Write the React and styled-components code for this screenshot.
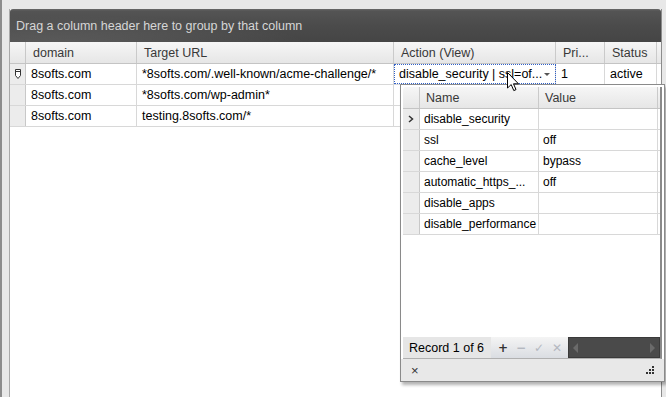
import React from 'react';
import styled, { createGlobalStyle } from 'styled-components';

const GlobalStyle = createGlobalStyle`
    html, body {
        margin: 0;
        padding: 0;
        background: #e8e8e8;
        font-family: "Liberation Sans", Arial, sans-serif;
        font-size: 12px;
        color: #000;
    }
`;

const columns = [
    { key: 'domain', title: 'domain', width: 111 },
    { key: 'url', title: 'Target URL', width: 257 },
    { key: 'action', title: 'Action (View)', width: 162 },
    { key: 'pri', title: 'Pri...', width: 49 },
    { key: 'status', title: 'Status', width: 52 },
];

const rows = [
    { domain: '8softs.com', url: '*8softs.com/.well-known/acme-challenge/*', action: 'disable_security | ssl=of...', pri: '1', status: 'active', editing: true },
    { domain: '8softs.com', url: '*8softs.com/wp-admin*' },
    { domain: '8softs.com', url: 'testing.8softs.com/*' },
];

const actions = [
    { name: 'disable_security', value: '', current: true },
    { name: 'ssl', value: 'off' },
    { name: 'cache_level', value: 'bypass' },
    { name: 'automatic_https_...', value: 'off' },
    { name: 'disable_apps', value: '' },
    { name: 'disable_performance', value: '' },
];

const PenIcon = () => (
    <svg width="6" height="10" viewBox="0 0 6 10">
        <path d="M0.5 0.5 H5.5 V6.5 L3 9.5 L0.5 6.5 Z" fill="#fff" stroke="#333" strokeWidth="1" />
        <path d="M0.5 2.5 H5.5" stroke="#333" strokeWidth="1" />
    </svg>
);

const Chevron = () => (
    <svg width="6" height="8" viewBox="0 0 6 8">
        <path d="M1 1 L4.5 4 L1 7" fill="none" stroke="#333" strokeWidth="1.5" />
    </svg>
);

const Cursor = () => (
    <svg width="13" height="20" viewBox="0 0 13 20">
        <path d="M0.5 0.5 V16 L4.2 12.6 L6.8 18.6 L9 17.6 L6.5 11.8 H11.5 Z" fill="#fff" stroke="#000" strokeWidth="1" strokeLinejoin="round" />
    </svg>
);

const Grip = () => (
    <svg width="9" height="9" viewBox="0 0 9 9">
        <rect x="6" y="0" width="2" height="2" fill="#333" />
        <rect x="3" y="3" width="2" height="2" fill="#333" />
        <rect x="6" y="3" width="2" height="2" fill="#333" />
        <rect x="0" y="6" width="2" height="2" fill="#333" />
        <rect x="3" y="6" width="2" height="2" fill="#333" />
        <rect x="6" y="6" width="2" height="2" fill="#333" />
    </svg>
);

const App = () => {
    return (
        <>
            <GlobalStyle />
            <Page>
                <Frame>
                    <GroupPanel>Drag a column header here to group by that column</GroupPanel>
                    <Table>
                        <HeaderRow>
                            <Indicator header />
                            {columns.map((c) => (
                                <HeadCell key={c.key} style={{ width: c.width }}>{c.title}</HeadCell>
                            ))}
                        </HeaderRow>
                        {rows.map((r, i) => (
                            <Row key={i}>
                                <Indicator>{r.editing && <PenIcon />}</Indicator>
                                {columns.map((c) => (
                                    <Cell key={c.key} style={{ width: c.width }} focused={r.editing && c.key === 'action'}>
                                        {r[c.key]}
                                        {r.editing && c.key === 'action' && <DropArrow />}
                                    </Cell>
                                ))}
                            </Row>
                        ))}
                    </Table>
                </Frame>

                <Popup>
                    <InnerGrid>
                        <PopHeader>
                            <PopIndicator header />
                            <PopHeadCell>Name</PopHeadCell>
                            <PopHeadCell>Value</PopHeadCell>
                        </PopHeader>
                        {actions.map((a) => (
                            <PopRow key={a.name}>
                                <PopIndicator>{a.current && <Chevron />}</PopIndicator>
                                <PopCell>{a.name}</PopCell>
                                <PopCell>{a.value}</PopCell>
                            </PopRow>
                        ))}
                        <Spacer />
                        <Navigator>
                            <RecordLabel>Record 1 of 6</RecordLabel>
                            <NavButtons>
                                <NavBtn active>+</NavBtn>
                                <NavBtn>−</NavBtn>
                                <NavBtn>✓</NavBtn>
                                <NavBtn>✕</NavBtn>
                            </NavButtons>
                            <HScroll>
                                <ArrowL />
                                <ArrowR />
                            </HScroll>
                        </Navigator>
                    </InnerGrid>
                    <PopFooter>
                        <CloseX>×</CloseX>
                        <Grip />
                    </PopFooter>
                </Popup>

                <CursorWrap>
                    <Cursor />
                </CursorWrap>
            </Page>
        </>
    );
};

export default App;

const Page = styled.div`
    position: relative;
    width: 666px;
    height: 397px;
    overflow: hidden;
    background: #e8e8e8;
    box-sizing: border-box;
    border-left: 2px solid #8c8c8c;
    padding: 9px 4px 0 7px;
`;

const Frame = styled.div`
    height: 100%;
    border-left: 1px solid #a9a9a9;
    border-right: 1px solid #8c8c8c;
    background: #fff;
    display: flex;
    flex-direction: column;
`;

const GroupPanel = styled.div`
    height: 33px;
    flex: none;
    display: flex;
    align-items: center;
    padding-left: 6px;
    padding-top: 1px;
    box-sizing: border-box;
    color: #d6d6d6;
    font-size: 12.5px;
    border-radius: 3px 3px 0 0;
    background:
        radial-gradient(ellipse 260px 30px at 40px 36px, rgba(255, 255, 255, 0.12), rgba(255, 255, 255, 0) 100%),
        linear-gradient(to bottom, #6a6a6a 0, #545454 2px, #4b4b4b 50%, #454545 100%);
`;

const Table = styled.div`
    display: flex;
    flex-direction: column;
`;

const HeaderRow = styled.div`
    display: flex;
    height: 21px;
    background: linear-gradient(to bottom, #f6f6f6, #e6e6e6);
    border-bottom: 1px solid #c4c4c4;
`;

const Indicator = styled.div`
    width: 16px;
    flex: none;
    box-sizing: border-box;
    border-right: 1px solid #c8c8c8;
    background: ${(p) => (p.header ? 'transparent' : '#ececec')};
    display: flex;
    align-items: center;
    justify-content: center;
`;

const HeadCell = styled.div`
    flex: none;
    box-sizing: border-box;
    padding-left: 7px;
    display: flex;
    align-items: center;
    border-right: 1px solid #cacaca;
    color: #383838;
    font-size: 12.5px;
`;

const Row = styled.div`
    display: flex;
    height: 20px;
    border-bottom: 1px solid #d8d8d8;
`;

const Cell = styled.div`
    position: relative;
    flex: none;
    box-sizing: border-box;
    padding-left: 5px;
    display: flex;
    align-items: center;
    border-right: 1px solid #d8d8d8;
    font-size: 12.5px;
    white-space: nowrap;
    overflow: hidden;
    outline: ${(p) => (p.focused ? '1px dotted #3060c8' : 'none')};
    outline-offset: -1px;
`;

const DropArrow = styled.span`
    position: absolute;
    right: 5px;
    top: 9px;
    border-left: 3px solid transparent;
    border-right: 3px solid transparent;
    border-top: 3px solid #555;
`;

const Popup = styled.div`
    position: absolute;
    left: 398px;
    top: 84px;
    width: 265px;
    height: 298px;
    box-sizing: border-box;
    border: 1px solid #8a8a8a;
    background: #fff;
    box-shadow: 2px 3px 3px rgba(0, 0, 0, 0.3);
    display: flex;
    flex-direction: column;
`;

const InnerGrid = styled.div`
    flex: 1;
    margin: 2px 2px 0 2px;
    border-right: 2px solid #8a8a8a;
    border-bottom: 1px solid #b0b0b0;
    display: flex;
    flex-direction: column;
`;

const PopHeader = styled.div`
    display: flex;
    height: 21px;
    border-radius: 3px 3px 0 0;
    background: linear-gradient(to bottom, #f6f6f6, #e6e6e6);
    border-bottom: 1px solid #c4c4c4;
`;

const PopIndicator = styled.div`
    width: 17px;
    flex: none;
    box-sizing: border-box;
    border-right: 1px solid #c8c8c8;
    background: ${(p) => (p.header ? 'transparent' : '#ececec')};
    display: flex;
    align-items: center;
    justify-content: center;
`;

const PopHeadCell = styled.div`
    width: 119px;
    flex: none;
    box-sizing: border-box;
    padding-left: 6px;
    display: flex;
    align-items: center;
    border-right: 1px solid #cacaca;
    color: #383838;
    font-size: 12.5px;
`;

const PopRow = styled.div`
    display: flex;
    height: 20px;
    border-bottom: 1px solid #d8d8d8;
`;

const PopCell = styled.div`
    width: 119px;
    flex: none;
    box-sizing: border-box;
    padding-left: 4px;
    display: flex;
    align-items: center;
    border-right: 1px solid #d8d8d8;
    font-size: 12px;
    white-space: nowrap;
    overflow: hidden;
`;

const Spacer = styled.div`
    flex: 1;
`;

const Navigator = styled.div`
    height: 21px;
    display: flex;
`;

const RecordLabel = styled.div`
    width: 88px;
    flex: none;
    background: #e6e6e6;
    display: flex;
    align-items: center;
    padding-left: 6px;
    box-sizing: border-box;
    font-size: 12.5px;
`;

const NavButtons = styled.div`
    width: 77px;
    flex: none;
    display: flex;
    align-items: center;
    gap: 2px;
    padding-left: 4px;
    box-sizing: border-box;
    background: linear-gradient(to bottom, #f4f4f4, #dadde2);
`;

const NavBtn = styled.span`
    width: 16px;
    text-align: center;
    font-size: 12px;
    font-weight: bold;
    color: ${(p) => (p.active ? '#333' : '#b4b8c0')};
    font-family: "DejaVu Sans", sans-serif;
`;

const HScroll = styled.div`
    flex: 1;
    background: #4a4a4a;
    border: 1px solid #3a3a3a;
    display: flex;
    align-items: center;
    justify-content: space-between;
    padding: 0 4px;
`;

const ArrowL = styled.span`
    border-top: 5px solid transparent;
    border-bottom: 5px solid transparent;
    border-right: 5px solid #6a6a6a;
`;

const ArrowR = styled.span`
    border-top: 5px solid transparent;
    border-bottom: 5px solid transparent;
    border-left: 5px solid #6a6a6a;
`;

const PopFooter = styled.div`
    height: 22px;
    flex: none;
    background: #e8e8e8;
    display: flex;
    align-items: center;
    justify-content: space-between;
    padding: 0 9px 0 10px;
`;

const CloseX = styled.span`
    font-size: 13px;
    color: #333;
`;

const CursorWrap = styled.div`
    position: absolute;
    left: 505px;
    top: 72px;
    line-height: 0;
`;
